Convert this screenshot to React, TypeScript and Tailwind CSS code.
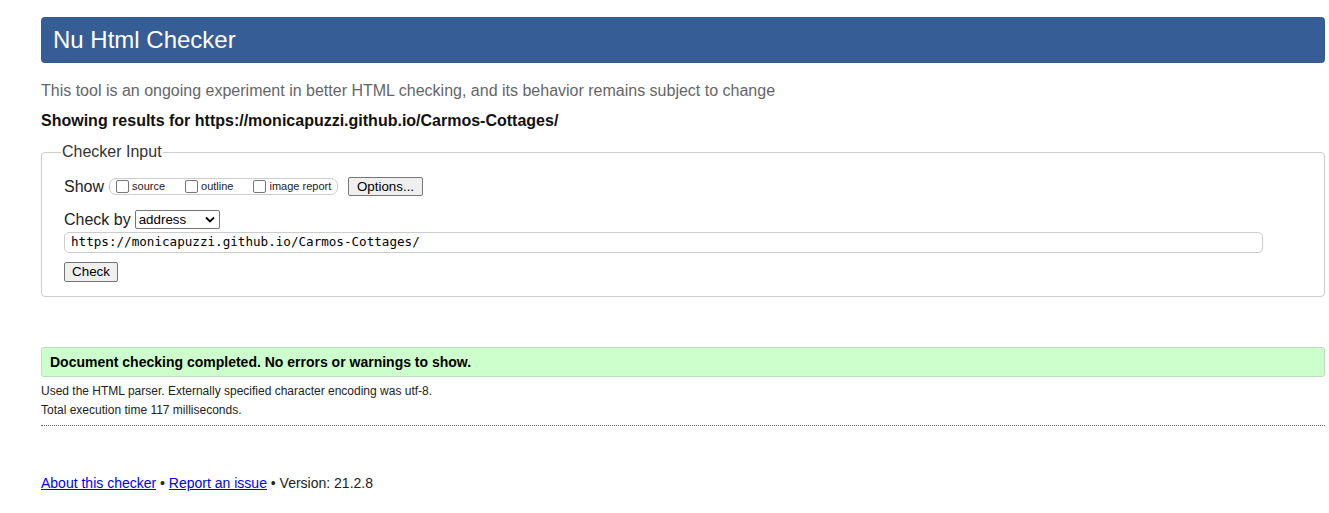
export default function App() {
  return (
    <div className="ml-[41px] mr-[4px] pt-[17px] font-['Liberation_Sans',Arial,sans-serif] text-[#222]">
      <header className="flex h-[46px] items-center rounded-[4px] bg-[#365d95] pl-[12px]">
        <h1 className="text-[24px] leading-none text-white">Nu Html Checker</h1>
      </header>

      <p className="mt-[19px] text-[16px] leading-[18px] text-[#666]">
        This tool is an ongoing experiment in better HTML checking, and its behavior remains subject to change
      </p>
      <p className="mt-[12px] text-[16px] font-bold leading-[18px] text-[#111]">
        Showing results for https://monicapuzzi.github.io/Carmos-Cottages/
      </p>

      <fieldset className="mt-[13px] rounded-[4px] border border-[#ccc] pl-[19px] pr-[20px] pb-[13px]">
        <legend className="px-[1px] text-[16px] leading-[18px] text-[#333]">Checker Input</legend>
        <div className="pl-[3px]">
          <div className="mt-[16px] flex items-center">
            <span className="text-[16px] leading-[18px]">Show</span>
            <div className="ml-[5px] flex h-[17px] w-[229px] items-center rounded-[7px] border border-[#ccc] pl-[6px] text-[11px] text-[#222]">
              <label className="flex items-center">
                <span className="inline-block h-[13px] w-[13px] rounded-[2px] border border-[#767676] bg-white" />
                <span className="ml-[3px]">source</span>
              </label>
              <label className="ml-[20px] flex items-center">
                <span className="inline-block h-[13px] w-[13px] rounded-[2px] border border-[#767676] bg-white" />
                <span className="ml-[3px]">outline</span>
              </label>
              <label className="ml-[20px] flex items-center">
                <span className="inline-block h-[13px] w-[13px] rounded-[2px] border border-[#767676] bg-white" />
                <span className="ml-[3px]">image report</span>
              </label>
            </div>
            <button className="ml-[10px] h-[19px] w-[75px] rounded-[2px] border border-[#767676] bg-[#efefef] text-[13.33px] leading-none text-black">
              Options...
            </button>
          </div>

          <div className="mt-[14px] flex items-center">
            <span className="text-[16px] leading-[18px]">Check by</span>
            <div className="ml-[4px] flex h-[19px] w-[85px] items-center justify-between rounded-[2px] border border-[#767676] bg-white pl-[3px] pr-[4px] text-[13.33px] text-black">
              <span>address</span>
              <svg width="10" height="7" viewBox="0 0 10 7" fill="none">
                <path d="M1 1.5 L5 5.5 L9 1.5" stroke="#000" strokeWidth="1.8" />
              </svg>
            </div>
          </div>

          <div className="mt-[3px] mr-[41px] flex h-[21px] items-center rounded-[5px] border border-[#ccc] pl-[6px] font-['DejaVu_Sans_Mono',monospace] text-[12.6px] text-black">
            https://monicapuzzi.github.io/Carmos-Cottages/
          </div>

          <button className="mt-[9px] h-[20px] w-[54px] rounded-[2px] border border-[#767676] bg-[#efefef] text-[13.33px] leading-none text-black">
            Check
          </button>
        </div>
      </fieldset>

      <div className="mt-[50px] flex h-[30px] items-center rounded-[3px] border border-[#bcdcbc] bg-[#ccffcc] pl-[8px]">
        <p className="text-[14px] font-bold text-black">Document checking completed. No errors or warnings to show.</p>
      </div>

      <div className="mt-[5px] text-[12px] leading-[19px] text-[#222]">
        <p>Used the HTML parser. Externally specified character encoding was utf-8.</p>
        <p>Total execution time 117 milliseconds.</p>
      </div>

      <div className="mt-[5px] border-t border-dotted border-[#666]" />

      <p className="mt-[49px] text-[14px] leading-[16px] text-[#222]">
        <a href="#" className="text-[#0000ee] underline">About this checker</a>
        {" • "}
        <a href="#" className="text-[#0000ee] underline">Report an issue</a>
        {" • Version: 21.2.8"}
      </p>
    </div>
  );
}
